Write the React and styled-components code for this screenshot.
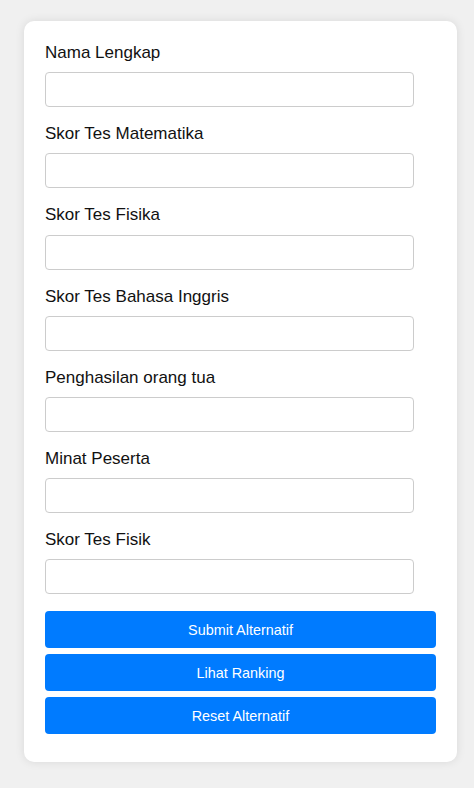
import React from "react";
import styled, { createGlobalStyle } from "styled-components";

const fields = [
  { id: "nama", label: "Nama Lengkap" },
  { id: "matematika", label: "Skor Tes Matematika" },
  { id: "fisika", label: "Skor Tes Fisika" },
  { id: "inggris", label: "Skor Tes Bahasa Inggris" },
  { id: "penghasilan", label: "Penghasilan orang tua" },
  { id: "minat", label: "Minat Peserta" },
  { id: "fisik", label: "Skor Tes Fisik" },
];

const App = () => {
  return (
    <Page>
      <GlobalStyle />
      <Card>
        <Form onSubmit={(e) => e.preventDefault()}>
          {fields.map((f) => (
            <Field key={f.id}>
              <label htmlFor={f.id}>{f.label}</label>
              <input type="text" id={f.id} name={f.id} />
            </Field>
          ))}
          <ButtonGroup>
            <Button type="submit">Submit Alternatif</Button>
            <Button type="button">Lihat Ranking</Button>
            <Button type="button">Reset Alternatif</Button>
          </ButtonGroup>
        </Form>
      </Card>
    </Page>
  );
};

export default App;

const GlobalStyle = createGlobalStyle`
  html, body {
    margin: 0;
    padding: 0;
    background-color: #f0f0f0;
    font-family: "Liberation Sans", Arial, sans-serif;
  }
`;

const Page = styled.div`
  min-height: 788px;
  padding: 21px 17px 26px 24px;
  box-sizing: border-box;
  background-color: #f0f0f0;
`;

const Card = styled.div`
  width: 433px;
  box-sizing: border-box;
  background-color: #ffffff;
  border-radius: 10px;
  padding: 21px 21px 28px 21px;
  box-shadow: 0 0 10px rgba(0, 0, 0, 0.1);
`;

const Form = styled.form`
  display: flex;
  flex-direction: column;
`;

const Field = styled.div`
  display: flex;
  flex-direction: column;
  margin-bottom: 16px;

  label {
    display: block;
    font-size: 17px;
    line-height: 19.2px;
    color: #111111;
    padding-top: 1px;
    margin-bottom: 10px;
  }

  input {
    width: 369px;
    height: 35px;
    box-sizing: border-box;
    padding: 8px 10px;
    border: 1px solid #cccccc;
    border-radius: 4px;
    font-size: 14px;
    font-family: "Liberation Sans", Arial, sans-serif;
    background: #ffffff;
  }
`;

const ButtonGroup = styled.div`
  display: flex;
  flex-direction: column;
  gap: 6px;
  margin-top: 1px;
`;

const Button = styled.button`
  width: 100%;
  height: 37px;
  border: none;
  border-radius: 4px;
  background-color: #007bff;
  color: #ffffff;
  font-size: 14.4px;
  font-family: "Liberation Sans", Arial, sans-serif;
  cursor: pointer;

  &:hover {
    background-color: #0069d9;
  }
`;
